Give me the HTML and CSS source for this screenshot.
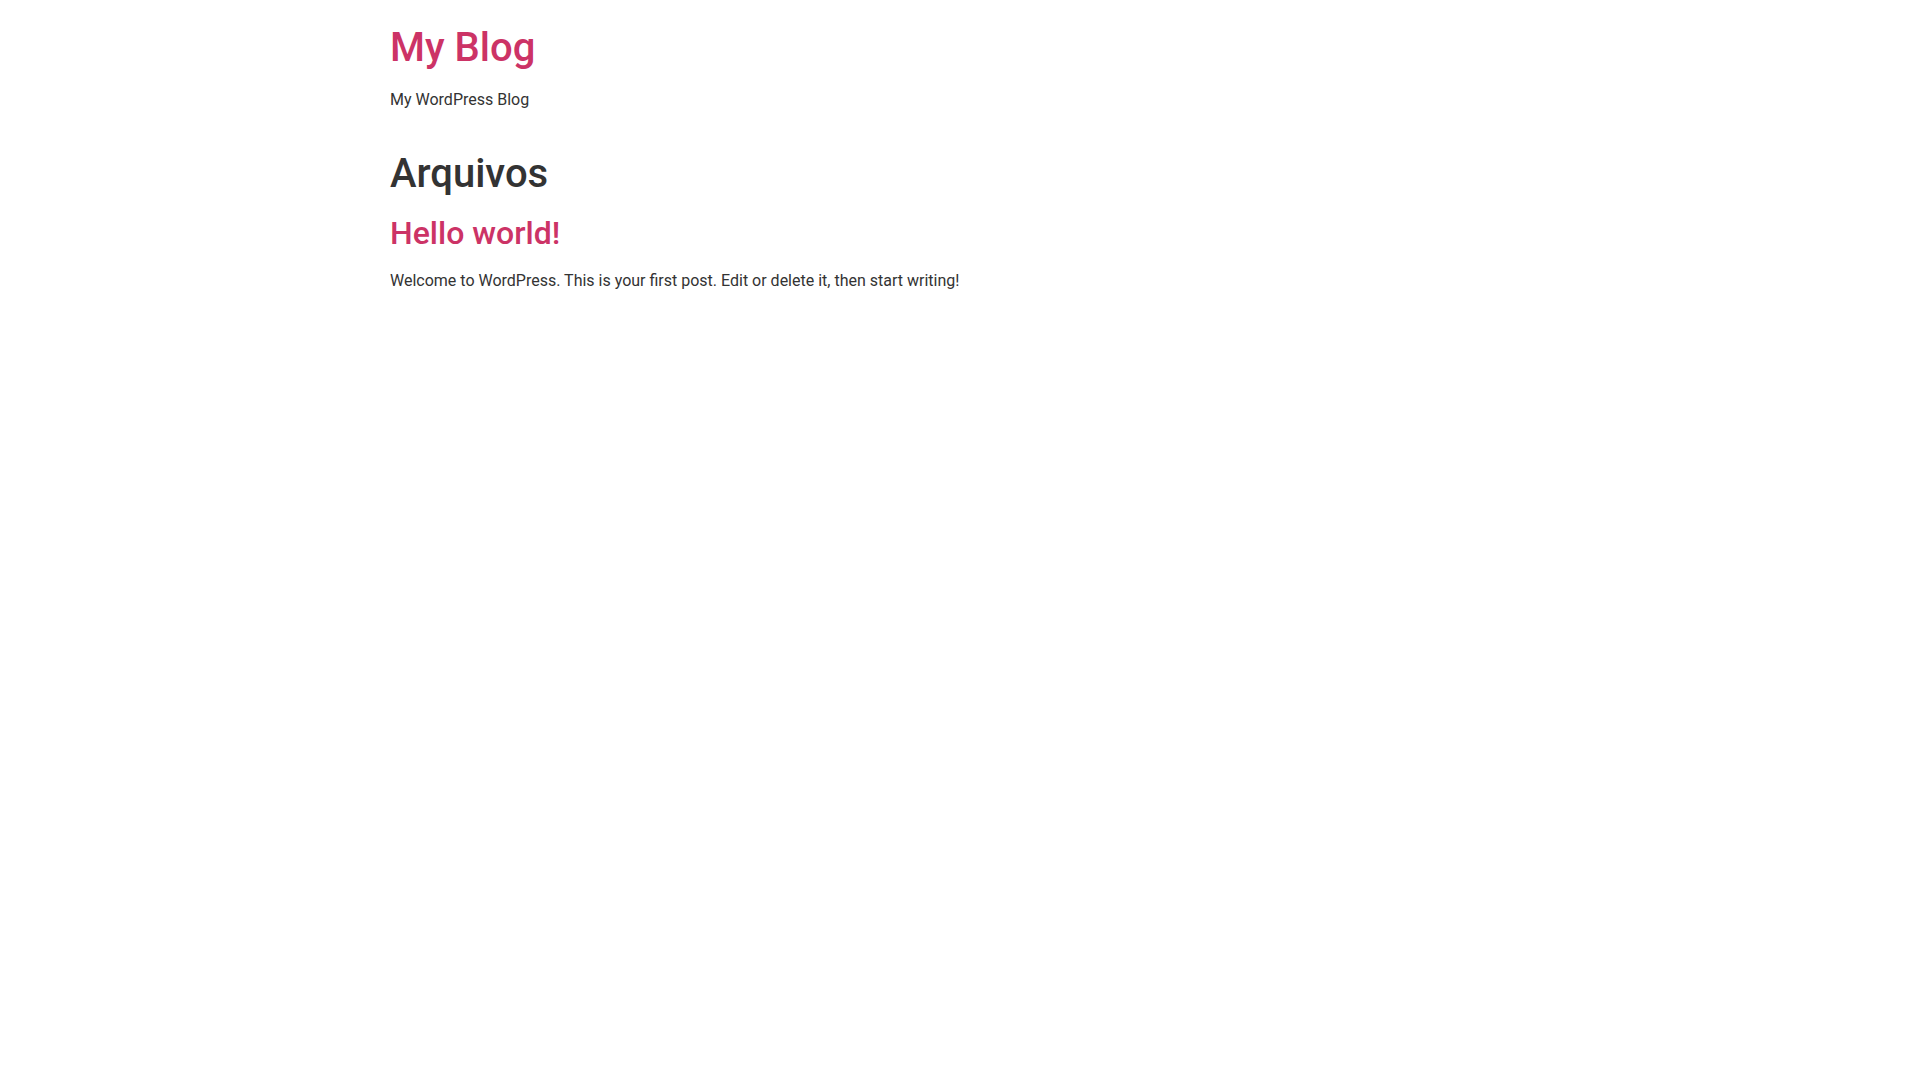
FILE: index.html
```html
<!DOCTYPE html>
<html lang="pt-BR">
<head>
<meta charset="utf-8">
<title>Arquivos – My Blog</title>
<link rel="stylesheet" href="styles.css">
</head>
<body>
<header class="site-header">
  <div class="site-branding">
    <h1 class="site-title"><a href="#">My Blog</a></h1>
    <p class="site-description">My WordPress Blog</p>
  </div>
</header>
<main class="site-main">
  <div class="page-header">
    <h1 class="entry-title">Arquivos</h1>
  </div>
  <div class="page-content">
    <article class="post">
      <h2 class="entry-title"><a href="#">Hello world!</a></h2>
      <p>Welcome to WordPress. This is your first post. Edit or delete it, then start writing!</p>
    </article>
  </div>
</main>
</body>
</html>
```
FILE: styles.css
```css
html {
  line-height: 1.15;
}
body {
  margin: 0;
  font-family: Roboto, "Liberation Sans", Arial, sans-serif;
  font-size: 16px;
  font-weight: 400;
  line-height: 1.5;
  color: #333;
  background-color: #fff;
}
h1, h2 {
  margin-top: 8px;
  margin-bottom: 16px;
  font-family: inherit;
  font-weight: 500;
  line-height: 1.2;
  color: inherit;
}
h1 {
  font-size: 40px;
}
h2 {
  font-size: 32px;
}
p {
  margin-top: 0;
  margin-bottom: 14.4px;
}
a {
  color: #c36;
  text-decoration: none;
}
.site-header,
.site-main {
  max-width: 1140px;
  width: 100%;
  margin-left: auto;
  margin-right: auto;
}
.site-header {
  display: flex;
  padding-top: 16px;
  padding-bottom: 16px;
}
.site-branding {
  display: flex;
  flex-direction: column;
}
```
